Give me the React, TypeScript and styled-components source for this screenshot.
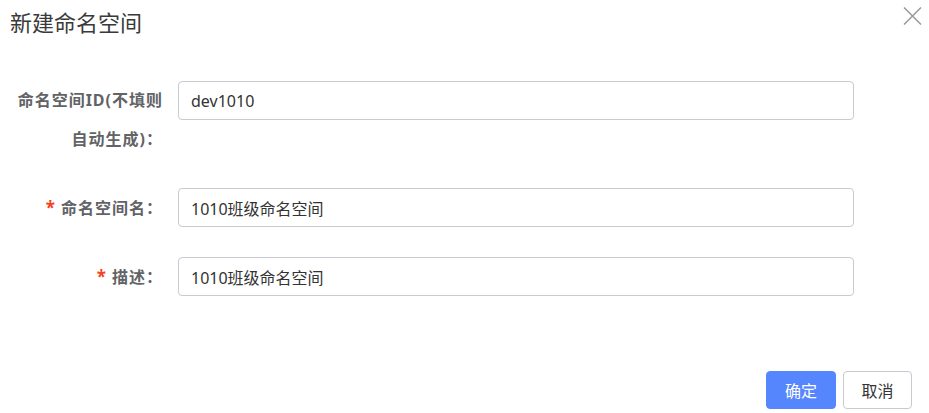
import React from "react";
import styled, { createGlobalStyle } from "styled-components";

const Global = createGlobalStyle`
  html, body { margin: 0; padding: 0; background: #fff; }
  body { font-family: "Noto Sans", "Noto Sans CJK SC", sans-serif; }
  * { box-sizing: border-box; }
`;

const Dialog = styled.div`
  width: 929px;
  height: 413px;
  display: flex;
  flex-direction: column;
  background: #fff;
`;

const Header = styled.div`
  display: flex;
  align-items: flex-start;
  justify-content: space-between;
  padding: 3px 6px 0 10px;
  height: 81px;
`;

const Title = styled.div`
  font-family: "Noto Sans CJK SC", sans-serif;
  font-size: 22px;
  line-height: 36px;
  color: #3a3a3a;
`;

const Close = styled.button`
  border: none;
  background: transparent;
  padding: 0;
  margin-top: 2px;
  width: 22px;
  height: 22px;
  display: flex;
  align-items: center;
  justify-content: center;
  cursor: pointer;
`;

const Form = styled.div`
  display: flex;
  flex-direction: column;
  gap: 29px;
`;

const Row = styled.div`
  display: flex;
  align-items: flex-start;
`;

const Label = styled.label`
  width: 153px;
  margin-left: 10px;
  margin-right: 15px;
  text-align: right;
  font-family: "Noto Sans", "Noto Sans CJK SC", sans-serif;
  font-weight: 700;
  font-size: 16px;
  letter-spacing: 1px;
  line-height: 39px;
  color: #626366;
`;

const Star = styled.span`
  color: #f5431f;
  font-size: 17px;
  margin-right: 5px;
`;

const Input = styled.input`
  width: 676px;
  height: 39px;
  border: 1px solid #c8c9d1;
  border-radius: 4px;
  padding: 0 12px;
  font-family: "Noto Sans", "Noto Sans CJK SC", sans-serif;
  font-size: 16px;
  color: #333;
  outline: none;
  background: #fff;
`;

const Footer = styled.div`
  margin-top: auto;
  display: flex;
  justify-content: flex-end;
  gap: 7px;
  padding: 0 17px 4px 0;
`;

const Button = styled.button<{ $primary?: boolean }>`
  height: 38px;
  width: ${(p) => (p.$primary ? 70 : 69)}px;
  border-radius: 4px;
  font-family: "Noto Sans CJK SC", sans-serif;
  font-size: 16px;
  cursor: pointer;
  border: 1px solid ${(p) => (p.$primary ? "#5586fd" : "#c8c9d1")};
  background: ${(p) => (p.$primary ? "#5586fd" : "#fff")};
  color: ${(p) => (p.$primary ? "#fff" : "#333")};
`;

export default function App() {
  return (
    <Dialog>
      <Global />
      <Header>
        <Title>新建命名空间</Title>
        <Close aria-label="关闭">
          <svg width="19" height="18" viewBox="0 0 19 18">
            <path d="M1 0.5 L18 17.5 M18 0.5 L1 17.5" stroke="#9a9a9a" strokeWidth="1.5" fill="none" />
          </svg>
        </Close>
      </Header>
      <Form>
        <Row>
          <Label>命名空间ID(不填则自动生成)：</Label>
          <Input defaultValue="dev1010" />
        </Row>
        <Row>
          <Label>
            <Star>*</Star>命名空间名：
          </Label>
          <Input defaultValue="1010班级命名空间" />
        </Row>
        <Row>
          <Label>
            <Star>*</Star>描述：
          </Label>
          <Input defaultValue="1010班级命名空间" />
        </Row>
      </Form>
      <Footer>
        <Button $primary>确定</Button>
        <Button>取消</Button>
      </Footer>
    </Dialog>
  );
}
